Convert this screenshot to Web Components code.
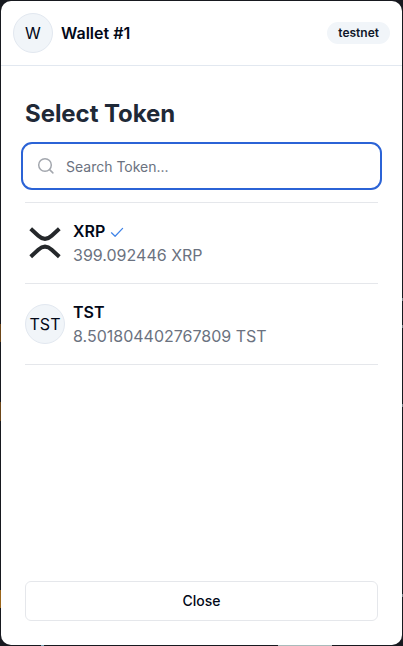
<!DOCTYPE html>
<html lang="en">
<head>
<meta charset="utf-8">
<title>Select Token</title>
<style>
html,body{margin:0;height:100%;overflow:hidden}
body{font-family:Inter,"Liberation Sans",sans-serif;color:#020817;font-size:16px;line-height:24px}
</style>
</head>
<body>
<wallet-window>
  <wallet-header slot="header" name="Wallet #1" network="testnet"></wallet-header>
  <token-search placeholder="Search Token..."></token-search>
  <token-list>
    <token-row name="XRP" amount="399.092446 XRP" selected><xrp-logo slot="icon"></xrp-logo></token-row>
    <token-row name="TST" amount="8.501804402767809 TST"><round-avatar slot="icon">TST</round-avatar></token-row>
  </token-list>
  <outline-button slot="footer">Close</outline-button>
</wallet-window>
<script>
function define(name, html, fill) {
  const template = document.createElement('template');
  template.innerHTML = html;
  customElements.define(name, class extends HTMLElement {
    constructor() {
      super();
      this.attachShadow({mode: 'open'}).append(template.content.cloneNode(true));
    }
    connectedCallback() { if (fill) fill(this, s => this.shadowRoot.querySelector(s)); }
  });
}

define('round-avatar', `<style>
:host{display:flex;box-sizing:border-box;width:40px;height:40px;flex:none;align-items:center;justify-content:center;border:1px solid #e2e8f0;border-radius:50%;background:#f1f5f9;line-height:24px}
</style><slot></slot>`);

define('xrp-logo', `<style>
:host{display:block;width:40px;height:40px;flex:none}svg{display:block}
</style><svg width="40" height="40" viewBox="0 0 40 40" fill="none" stroke="#25282b" stroke-width="4"><path d="M5.7 5.7 13.3 12.7Q20 18.9 26.7 12.7L34.3 5.7M5.7 33.7 13.3 26.7Q20 20.5 26.7 26.7L34.3 33.7"/></svg>`);

define('wallet-header', `<style>
:host{display:flex;box-sizing:border-box;height:65px;padding:0 12px;align-items:center;gap:8px;border-bottom:1px solid #e2e8f0}
.name{flex:1;font-weight:600}
.badge{box-sizing:border-box;height:22px;padding:3px 11px;border-radius:11px;background:#f1f5f9;color:#0f172a;font-size:12px;line-height:16px;font-weight:600}
</style><round-avatar>W</round-avatar><span class="name"></span><span class="badge"></span>`,
(el, $) => { $('.name').textContent = el.getAttribute('name'); $('.badge').textContent = el.getAttribute('network'); });

define('token-search', `<style>
:host{display:flex;box-sizing:border-box;height:48px;margin:0 -4px;padding:0 14px;align-items:center;gap:11px;border:2px solid #2b63d6;border-radius:11px;color:#6b7280;font-size:14px;line-height:20px}
svg{display:block;flex:none}span{padding-top:2px}
</style><svg width="18" height="18" viewBox="0 0 18 18" fill="none" stroke="#a3a7ae" stroke-width="1.5" stroke-linecap="round"><circle cx="8" cy="8" r="6.3"/><path d="m12.6 12.6 3.3 3.3"/></svg><span></span>`,
(el, $) => { $('span').textContent = el.getAttribute('placeholder'); });

define('token-list', `<style>
:host{display:block;margin-top:12px;border-top:1px solid #e5e7eb}
</style><slot></slot>`);

define('token-row', `<style>
:host{display:flex;box-sizing:border-box;height:81px;align-items:center;gap:8px;border-bottom:1px solid #e5e7eb}
.title{display:flex;align-items:center;gap:4px;font-weight:600}
.amount{color:#6b7280}
svg{display:none;margin-top:2px}
:host([selected]) svg{display:block}
</style><slot name="icon"></slot><div><div class="title"><span class="name"></span><svg width="16" height="16" viewBox="0 0 16 16" fill="none" stroke="#4285e8" stroke-width="1.25" stroke-linecap="round" stroke-linejoin="round"><path d="m2.5 8.8 3.6 3.5 7.5-7.9"/></svg></div><div class="amount"></div></div>`,
(el, $) => { $('.name').textContent = el.getAttribute('name'); $('.amount').textContent = el.getAttribute('amount'); });

define('outline-button', `<style>
:host{display:flex;box-sizing:border-box;height:40px;align-items:center;justify-content:center;border:1px solid #e5e7eb;border-radius:6px;font-size:14px;line-height:20px;font-weight:500}
</style><slot></slot>`);

define('wallet-window', `<style>
:host{display:block;box-sizing:border-box;height:646px;padding:1px;
background:
linear-gradient(#abb,#abb) 278px 645px/54px 1px no-repeat,
linear-gradient(#79a9bb,#79a9bb) 41px 645px/3px 1px no-repeat,
linear-gradient(#728087,#728087) 402px 298px/1px 3px no-repeat,
linear-gradient(#728087,#728087) 402px 325px/1px 3px no-repeat,
linear-gradient(#728087,#728087) 402px 404px/1px 3px no-repeat,
linear-gradient(#728087,#728087) 402px 594px/1px 3px no-repeat,
linear-gradient(#6b4518,#6b4518) 0 324px/1px 18px no-repeat,
linear-gradient(#6b4518,#6b4518) 0 402px/1px 19px no-repeat,
linear-gradient(#9a651a,#9a651a) 0 590px/1px 18px no-repeat,
#17191f}
.card{display:flex;flex-direction:column;box-sizing:border-box;height:644px;border-radius:10px;background:#fff;overflow:hidden}
main{display:flex;flex-direction:column;flex:1;padding:32px 24px 24px}
h1{margin:0 0 12px;font-size:24px;line-height:32px;font-weight:700;letter-spacing:-.06px;color:#1f2937}
.foot{margin-top:auto}
</style><div class="card"><slot name="header"></slot><main><h1>Select Token</h1><slot></slot><div class="foot"><slot name="footer"></slot></div></main></div>`);
</script>
</body>
</html>
